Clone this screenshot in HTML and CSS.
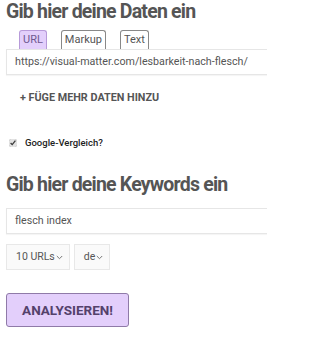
FILE: index.html
```html
<!DOCTYPE html>
<html lang="de">
<head>
<meta charset="utf-8">
<link rel="stylesheet" href="styles.css">
</head>
<body>
<div class="page">
  <h1 class="title">Gib hier deine Daten ein</h1>
  <div class="tabs">
    <span class="tab active">URL</span>
    <span class="tab">Markup</span>
    <span class="tab">Text</span>
  </div>
  <div class="input">https://visual-matter.com/lesbarkeit-nach-flesch/</div>
  <div class="add">+ FÜGE MEHR DATEN HINZU</div>
  <label class="check"><input type="checkbox" checked class="cb"><span>Google-Vergleich?</span></label>
  <h1 class="title title2">Gib hier deine Keywords ein</h1>
  <div class="input kw">flesch index</div>
  <div class="selects">
    <div class="sel">10 URLs<svg class="chev" viewBox="0 0 7 5" width="7" height="5"><path d="M0.8 1l2.7 2.7 2.7-2.7" fill="none" stroke="#777" stroke-width="1"/></svg></div>
    <div class="sel">de<svg class="chev" viewBox="0 0 7 5" width="7" height="5"><path d="M0.8 1l2.7 2.7 2.7-2.7" fill="none" stroke="#777" stroke-width="1"/></svg></div>
  </div>
  <button class="btn">ANALYSIEREN!</button>
</div>
</body>
</html>
```
FILE: styles.css
```css
html, body { margin: 0; padding: 0; background: #fff; }
body { font-family: Roboto, "Liberation Sans", sans-serif; color: #555; width: 267px; height: 350px; overflow: hidden; }
.page { padding: 0 0 0 6px; overflow: hidden; }
.title { margin: 0; font-size: 19.5px; line-height: 24px; font-weight: 700; color: #555; white-space: nowrap; letter-spacing: -0.8px; }
.tabs { display: flex; gap: 14px; padding-left: 13px; margin-top: 6px; height: 19px; position: relative; z-index: 1; }
.tab { font-size: 11px; line-height: 17px; padding: 0 3px; border: 1px solid #888; border-bottom: none; border-radius: 3px 3px 0 0; background: #fff; color: #555; }
.tab.active { background: #e3cffb; border-color: #b79ad9; color: #6e5890; }
.input { width: 290px; height: 24px; border: 1px solid #e6e6e6; font-size: 10.7px; line-height: 24px; padding-left: 8px; color: #555; box-shadow: 0 1px 1px rgba(0,0,0,0.04); white-space: nowrap; }
.add { margin: 16px 0 0 14px; font-size: 10.8px; font-weight: 700; color: #555; line-height: 14px; }
.check { display: flex; align-items: center; margin: 32px 0 0 3px; font-size: 9.5px; font-weight: 500; color: #222; }
.cb { width: 8px; height: 8px; margin: 0 8px 0 0; accent-color: #e2e2e2; }
.title2 { margin-top: 25px; }
.kw { margin-top: 11px; }
.selects { display: flex; gap: 4px; margin-top: 10px; }
.sel { height: 24px; border: 1px solid #e8e8e8; background: #fafafa; font-size: 10.5px; line-height: 24px; padding: 0 6px 0 9px; display: flex; align-items: center; color: #555; }
.chev { margin-left: 1px; }
.btn { display: block; margin-top: 23px; width: 123px; height: 34px; background: #e3cffb; border: 1px solid #8f7aa8; border-radius: 3px; font-family: Roboto, "Liberation Sans", sans-serif; font-size: 13.5px; font-weight: 700; color: #54416b; padding: 0; }
```
